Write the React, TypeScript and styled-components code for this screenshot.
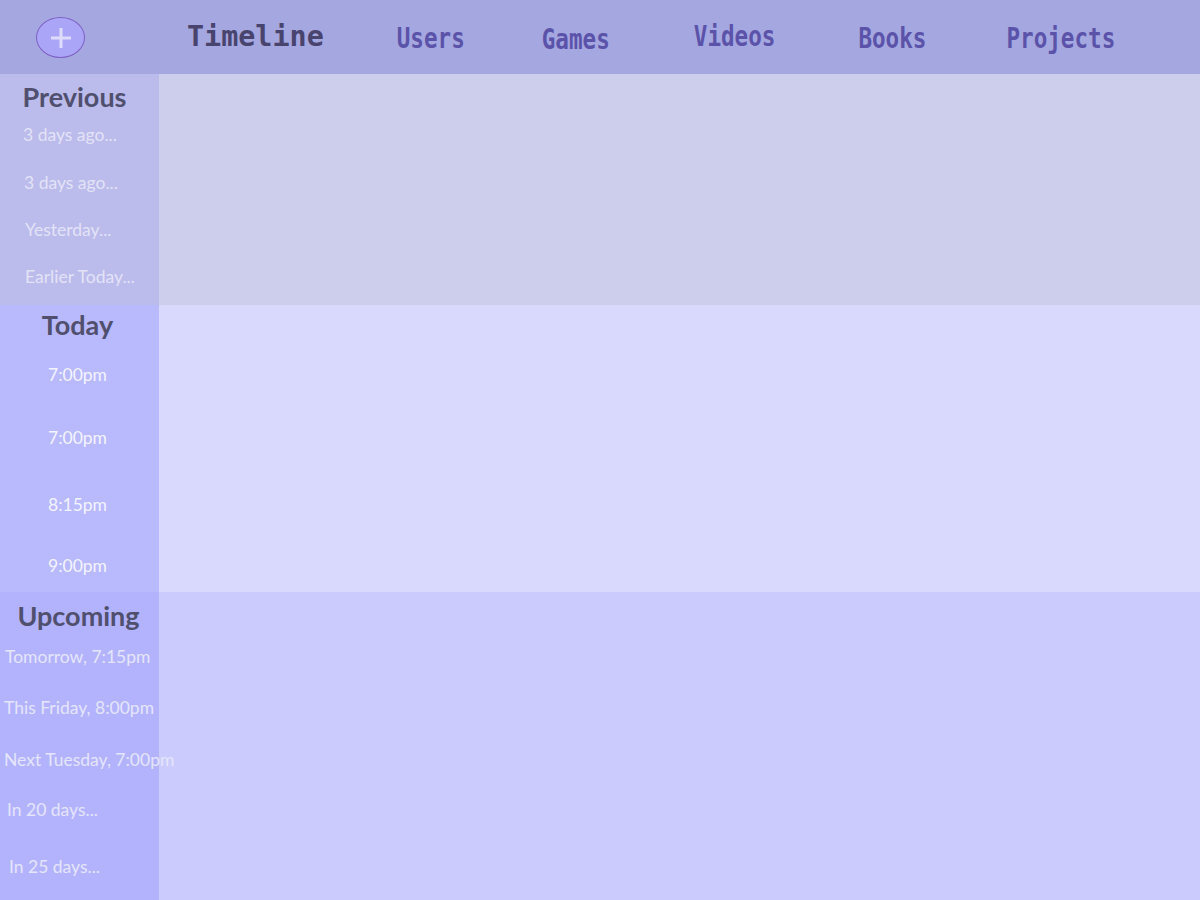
import React from "react";
import styled, { createGlobalStyle } from "styled-components";

const Global = createGlobalStyle`
  html, body { margin: 0; padding: 0; }
  body { width: 1200px; height: 900px; overflow: hidden; font-family: Lato, "Open Sans", sans-serif; }
`;

const Page = styled.div`
  width: 1200px;
  height: 900px;
  display: flex;
  flex-direction: column;
`;

const Header = styled.header`
  height: 74px;
  flex: none;
  background: #a5a7e0;
  display: flex;
  align-items: center;
  padding-left: 36px;
`;

const AddButton = styled.button`
  width: 49px;
  height: 41px;
  border-radius: 50%;
  background: #aaa5f6;
  border: 1px solid #7d5fc4;
  box-sizing: border-box;
  padding: 0;
  display: flex;
  align-items: center;
  justify-content: center;
  margin-top: 1px;
`;

const Nav = styled.nav`
  display: flex;
  align-items: center;
  margin-left: 102px;
`;

const NavLink = styled.a<{ $active?: boolean; $ml: number; $dy: number }>`
  display: inline-block;
  margin-left: ${(p) => p.$ml}px;
  font-family: "DejaVu Sans Mono", monospace;
  font-weight: bold;
  font-size: ${(p) => (p.$active ? 28.4 : 22.6)}px;
  line-height: 1;
  color: ${(p) => (p.$active ? "#48446e" : "#5b53a9")};
  transform: translateY(${(p) => p.$dy}px) ${(p) => (p.$active ? "" : "scaleY(1.22)")};
  cursor: pointer;
`;

const Section = styled.section<{ $h?: number }>`
  display: flex;
  ${(p) => (p.$h ? `height: ${p.$h}px; flex: none;` : "flex: 1;")}
`;

const Side = styled.div<{ $bg: string; $pt: number }>`
  position: relative;
  z-index: 1;
  width: 159px;
  flex: none;
  background: ${(p) => p.$bg};
  padding-top: ${(p) => p.$pt}px;
  box-sizing: border-box;
  display: flex;
  flex-direction: column;
  white-space: nowrap;
`;

const Main = styled.div<{ $bg: string }>`
  flex: 1;
  background: ${(p) => p.$bg};
`;

const Heading = styled.h2<{ $dx: number }>`
  margin: 0;
  font-family: Lato, sans-serif;
  font-weight: bold;
  font-size: 27px;
  line-height: 34px;
  color: #50506e;
  text-align: center;
  transform: translateX(${(p) => p.$dx}px);
`;

const Item = styled.div<{ $mt: number; $ml?: number; $center?: boolean; $color: string }>`
  margin-top: ${(p) => p.$mt}px;
  padding-left: ${(p) => p.$ml ?? 0}px;
  padding-right: ${(p) => (p.$center ? 4 : 0)}px;
  font-size: 17.5px;
  line-height: 20px;
  color: ${(p) => p.$color};
  text-align: ${(p) => (p.$center ? "center" : "left")};
`;

const navItems = [
  { label: "Timeline", active: true, ml: 0, dy: 0 },
  { label: "Users", ml: 73, dy: 1 },
  { label: "Games", ml: 77, dy: 2 },
  { label: "Videos", ml: 84, dy: -1 },
  { label: "Books", ml: 83, dy: 1 },
  { label: "Projects", ml: 80, dy: 1 },
];

export default function App() {
  return (
    <Page>
      <Global />
      <Header>
        <AddButton aria-label="Add">
          <svg width="24" height="24" viewBox="0 0 24 24">
            <path d="M12 2v20M2 12h20" stroke="#dedcfa" strokeWidth="3" />
          </svg>
        </AddButton>
        <Nav>
          {navItems.map((n) => (
            <NavLink key={n.label} $active={n.active} $ml={n.ml} $dy={n.dy}>
              {n.label}
            </NavLink>
          ))}
        </Nav>
      </Header>

      <Section $h={231}>
        <Side $bg="#bbbbec" $pt={6}>
          <Heading $dx={-5}>Previous</Heading>
          <Item $mt={11} $ml={23} $color="#e3e3f6">3 days ago...</Item>
          <Item $mt={28} $ml={24} $color="#e3e3f6">3 days ago...</Item>
          <Item $mt={27} $ml={25} $color="#e3e3f6">Yesterday...</Item>
          <Item $mt={27} $ml={25} $color="#e3e3f6">Earlier Today...</Item>
        </Side>
        <Main $bg="#cdcdec" />
      </Section>

      <Section $h={287}>
        <Side $bg="#b9b9fe" $pt={3}>
          <Heading $dx={-2}>Today</Heading>
          <Item $mt={23} $center $color="#f4f4ff">7:00pm</Item>
          <Item $mt={43} $center $color="#f4f4ff">7:00pm</Item>
          <Item $mt={47} $center $color="#f4f4ff">8:15pm</Item>
          <Item $mt={41} $center $color="#f4f4ff">9:00pm</Item>
        </Side>
        <Main $bg="#d9d9fe" />
      </Section>

      <Section>
        <Side $bg="#b3b3fd" $pt={7}>
          <Heading $dx={-1}>Upcoming</Heading>
          <Item $mt={14} $ml={5} $color="#e5e5fb">Tomorrow, 7:15pm</Item>
          <Item $mt={31} $ml={4} $color="#e5e5fb">This Friday, 8:00pm</Item>
          <Item $mt={32} $ml={4} $color="#e5e5fb">Next Tuesday, 7:00pm</Item>
          <Item $mt={30} $ml={7} $color="#e5e5fb">In 20 days...</Item>
          <Item $mt={37} $ml={9} $color="#e5e5fb">In 25 days...</Item>
        </Side>
        <Main $bg="#cbcbfd" />
      </Section>
    </Page>
  );
}
